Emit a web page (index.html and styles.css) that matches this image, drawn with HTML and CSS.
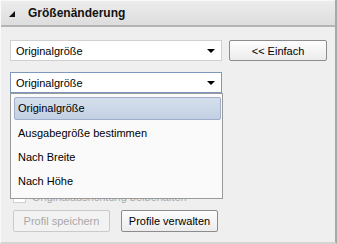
FILE: index.html
```html
<!DOCTYPE html>
<html lang="de">
<head>
  <meta charset="UTF-8">
  <title>Größenänderung</title>
  <link rel="stylesheet" href="styles.css">
</head>
<body>

  <div class="panel">
    <div class="header">
      <span class="toggle"></span>
      <h2>Größenänderung</h2>
    </div>

    <div class="content">
      <div class="row">
        <div class="select">
          <span>Originalgröße</span>
          <span class="arrow"></span>
        </div>
        <button class="btn wide">&lt;&lt; Einfach</button>
      </div>

      <div class="row drop">
        <div class="select focus">
          <span>Originalgröße</span>
          <span class="arrow"></span>
        </div>
        <!-- offene Liste liegt über dem Rest -->
        <ul class="list">
          <li class="sel">Originalgröße</li>
          <li>Ausgabegröße bestimmen</li>
          <li>Nach Breite</li>
          <li>Nach Höhe</li>
        </ul>
      </div>

      <label class="check">
        <span class="box"></span>
        Originalausrichtung beibehalten
      </label>

      <div class="row buttons">
        <button class="btn" disabled>Profil speichern</button>
        <button class="btn">Profile verwalten</button>
      </div>
    </div>
  </div>

</body>
</html>
```

FILE: styles.css
```css
body {
  margin: 0;
  font-family: "Liberation Sans", Arial, sans-serif;
  font-size: 11px;
  color: #000;
  background: #efefef;
}

.panel {
  width: 337px;
  height: 244px;
  box-sizing: border-box;
  border-left: 1px solid #fafafa;
  border-right: 2px solid #a8a8a8;
  border-bottom: 2px solid #d4d4d4;
  background: #efefef;
}

.header {
  height: 27px;
  box-sizing: border-box;
  display: flex;
  align-items: center;
  padding-left: 8px;
  background: linear-gradient(#ececec, #dddddd);
  border-top: 1px solid #f8f8f8;
  border-bottom: 2px solid #b4b4b4;
}

.toggle {
  width: 0;
  height: 0;
  border-left: 6px solid transparent;
  border-bottom: 6px solid #111;
  margin-top: 1px;
}

.header h2 {
  margin: 0 0 0 13px;
  font-size: 12px;
  font-weight: bold;
  color: #111;
}

.content {
  padding: 13px 0 0 9px;
}

.row {
  display: flex;
  gap: 7px;
  margin-bottom: 11px;
}

.select {
  width: 212px;
  height: 21px;
  box-sizing: border-box;
  display: flex;
  align-items: center;
  justify-content: space-between;
  padding: 0 6px 0 5px;
  background: #fff;
  border: 1px solid #d0d0d0;
}

.select.focus {
  border-color: #7f96bd;
}

.arrow {
  width: 0;
  height: 0;
  border-left: 4px solid transparent;
  border-right: 4px solid transparent;
  border-top: 4px solid #000;
}

.btn {
  height: 21px;
  padding: 0;
  white-space: nowrap;
  font-family: inherit;
  font-size: 11px;
  color: #000;
  background: linear-gradient(#fdfdfd, #ececec);
  border: 1px solid #8c8c8c;
  border-radius: 2px;
}

.btn.wide {
  width: 98px;
}

.btn:disabled {
  color: #a8a8a8;
  border-color: #cacaca;
  background: #f2f2f2;
}

.drop {
  position: relative;
}

.list {
  position: absolute;
  left: 0;
  top: 21px;
  width: 213px;
  margin: 0;
  padding: 3px 0 5px 3px;
  box-sizing: border-box;
  list-style: none;
  background: #fafafa;
  border: 1px solid #9a9a9a;
  z-index: 2;
}

.list li {
  height: 22px;
  line-height: 22px;
  padding-left: 3px;
  margin-right: 1px;
  border: 1px solid transparent;
  border-radius: 2px;
}

.list li.sel {
  height: 21px;
  line-height: 21px;
  background: linear-gradient(#d5dfec, #c3d0e3);
  border-color: #9eaecb;
  margin-bottom: 1px;
}

.check {
  display: flex;
  align-items: center;
  gap: 6px;
  height: 13px;
  margin: 97px 0 0 3px;
  color: #a8a8a8;
}

.box {
  width: 11px;
  height: 11px;
  background: #fff;
  border: 1px solid #d0d0d0;
}

.buttons {
  gap: 11px;
  margin-top: 7px;
  padding-left: 3px;
}

.buttons .btn {
  width: 97px;
  height: 22px;
}
```
